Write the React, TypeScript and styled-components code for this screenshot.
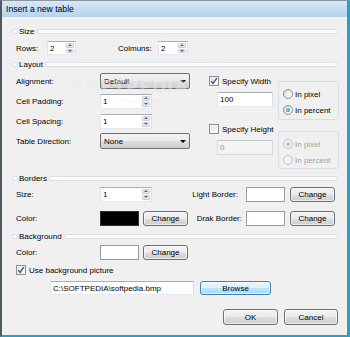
import styled, { createGlobalStyle } from 'styled-components';

const GlobalStyle = createGlobalStyle`
  html, body {
    margin: 0;
    padding: 0;
    background: #f0f0f0;
  }
  body {
    font-family: "Liberation Sans", Arial, sans-serif;
    font-size: 8px;
    color: #000;
  }
  * {
    box-sizing: border-box;
  }
`;

const Window = styled.div`
  width: 350px;
  height: 337px;
  position: relative;
  display: flex;
  flex-direction: column;
  background: #f0f0f0;
  border-top: 1px solid #8a96a2;
  border-left: 2px solid #4e5862;
  border-right: 3px solid #2e9dc4;
  border-bottom: 2px solid #2e9dc4;
  overflow: hidden;
`;

const TitleBar = styled.div`
  height: 16px;
  flex: none;
  padding-left: 4px;
  line-height: 16px;
  font-size: 8.6px;
  background: linear-gradient(#d9e8f6, #c2daf0 60%, #b8d3ec);
`;

const Content = styled.div`
  flex: 1;
  display: flex;
  flex-direction: column;
  padding: 0 9px 0 10px;
`;

const GroupHeader = styled.div<{ $top: number }>`
  height: 12px;
  margin-top: ${({ $top }) => $top}px;
  display: flex;
  align-items: center;
  &::before,
  &::after {
    content: '';
    height: 3px;
    border: 1px solid #d8dfe6;
    border-radius: 2px;
    background: #fbfcfd;
  }
  &::before {
    width: 4px;
  }
  &::after {
    flex: 1;
  }
  span {
    padding: 0 2px 0 1px;
  }
`;

const Row = styled.div<{ $top: number; $h?: number; $pl?: number }>`
  display: flex;
  align-items: center;
  height: ${({ $h }) => $h ?? 16}px;
  margin-top: ${({ $top }) => $top}px;
  padding-left: ${({ $pl }) => $pl ?? 4}px;
`;

const Label = styled.span<{ $w: number; $ml?: number; $right?: number }>`
  width: ${({ $w }) => $w}px;
  flex: none;
  margin-left: ${({ $ml }) => $ml ?? 0}px;
  text-align: ${({ $right }) => ($right !== undefined ? 'right' : 'left')};
  padding-right: ${({ $right }) => $right ?? 0}px;
  white-space: nowrap;
`;

const FieldBox = styled.div<{ $w: number; $h?: number; $ml?: number; $mt?: number; $disabled?: boolean }>`
  width: ${({ $w }) => $w}px;
  height: ${({ $h }) => $h ?? 15}px;
  margin-left: ${({ $ml }) => $ml ?? 0}px;
  margin-top: ${({ $mt }) => $mt ?? 0}px;
  flex: none;
  display: flex;
  align-items: center;
  background: ${({ $disabled }) => ($disabled ? '#f4f4f4' : '#fff')};
  color: ${({ $disabled }) => ($disabled ? '#8d8d8d' : '#000')};
  border: 1px solid;
  border-color: ${({ $disabled }) =>
    $disabled ? '#c9c9c9 #dadada #dadada #dadada' : '#abadb3 #dbdfe6 #e3e9ef #e2e3ea'};
  padding-left: 2px;
  white-space: nowrap;
  overflow: hidden;
`;

const SpinWrap = styled(FieldBox)`
  padding: 0 0 0 2px;
`;

const SpinValue = styled.span`
  flex: 1;
`;

const SpinButtons = styled.div`
  width: 9px;
  height: 100%;
  display: flex;
  flex-direction: column;
  gap: 1px;
  padding: 1px 1px 1px 0;
`;

const SpinBtn = styled.div<{ $down?: boolean }>`
  flex: 1;
  display: flex;
  align-items: center;
  justify-content: center;
  background: linear-gradient(#f6f6f6, #dfe3e8);
  border: 1px solid #c9ced6;
  border-radius: 1px;
  &::after {
    content: '';
    border-left: 2px solid transparent;
    border-right: 2px solid transparent;
    ${({ $down }) => ($down ? 'border-top' : 'border-bottom')}: 2px solid #4c607f;
  }
`;

const Combo = styled.div<{ $w: number }>`
  width: ${({ $w }) => $w}px;
  height: 16px;
  flex: none;
  display: flex;
  align-items: center;
  justify-content: space-between;
  padding: 0 3px 0 3px;
  border: 1px solid #707070;
  border-radius: 2px;
  background: linear-gradient(#f2f2f2 0%, #ebebeb 50%, #dddddd 51%, #cfcfcf 100%);
  &::after {
    content: '';
    border-left: 3px solid transparent;
    border-right: 3px solid transparent;
    border-top: 3px solid #000;
  }
`;

const Button = styled.div<{ $w: number; $h?: number; $ml?: number; $hover?: boolean }>`
  width: ${({ $w }) => $w}px;
  height: ${({ $h }) => $h ?? 15}px;
  margin-left: ${({ $ml }) => $ml ?? 0}px;
  flex: none;
  display: flex;
  align-items: center;
  justify-content: center;
  border: 1px solid ${({ $hover }) => ($hover ? '#3c7fb1' : '#707070')};
  border-radius: 3px;
  box-shadow: inset 0 0 0 1px ${({ $hover }) => ($hover ? 'rgba(255,255,255,0.7)' : 'rgba(255,255,255,0.6)')};
  background: ${({ $hover }) =>
    $hover
      ? 'linear-gradient(#eaf6fd 0%, #d9f0fc 50%, #bee6fd 51%, #a7d9f5 100%)'
      : 'linear-gradient(#f2f2f2 0%, #ebebeb 50%, #dddddd 51%, #cfcfcf 100%)'};
`;

const Swatch = styled.div<{ $color: string; $ml?: number }>`
  width: 39px;
  height: 15px;
  flex: none;
  margin-left: ${({ $ml }) => $ml ?? 0}px;
  background: ${({ $color }) => $color};
  border: 1px solid ${({ $color }) => ($color === '#000' ? '#303030' : '#9a9a9a')};
`;

const CheckBox = styled.div`
  width: 10px;
  height: 10px;
  flex: none;
  display: flex;
  align-items: center;
  justify-content: center;
  border: 1px solid #8e8f8f;
  background: linear-gradient(135deg, #dcdcdc, #f6f6f6 70%);
  box-shadow: inset 0 0 0 1px #f4f4f4;
  svg {
    display: block;
  }
`;

const CheckText = styled.span<{ $disabled?: boolean }>`
  margin-left: 3px;
  white-space: nowrap;
  color: ${({ $disabled }) => ($disabled ? '#a3a3a3' : '#000')};
`;

const LayoutBody = styled.div`
  display: flex;
  margin-top: 3px;
  padding-left: 4px;
`;

const LeftCol = styled.div`
  width: 193px;
  flex: none;
  display: flex;
  flex-direction: column;
  gap: 4px;
`;

const LeftRow = styled.div`
  display: flex;
  align-items: center;
  height: 16px;
`;

const RightCol = styled.div`
  display: flex;
  flex-direction: column;
  gap: 1px;
`;

const SpecBlock = styled.div`
  display: flex;
  align-items: flex-start;
`;

const SpecStack = styled.div`
  width: 64px;
  display: flex;
  flex-direction: column;
`;

const CheckRow = styled.div`
  height: 16px;
  display: flex;
  align-items: center;
`;

const RadioBox = styled.div<{ $top: number; $h: number }>`
  width: 61px;
  height: ${({ $h }) => $h}px;
  margin: ${({ $top }) => $top}px 0 0 5px;
  padding: 4px 0 0 4px;
  border: 1px solid #d5dfe5;
  border-radius: 3px;
`;

const RadioRow = styled.div`
  height: 16px;
  display: flex;
  align-items: center;
`;

const Radio = styled.div<{ $checked?: boolean; $disabled?: boolean }>`
  width: 10px;
  height: 10px;
  flex: none;
  border-radius: 50%;
  display: flex;
  align-items: center;
  justify-content: center;
  border: 1px solid ${({ $disabled }) => ($disabled ? '#c4c4c4' : '#8e8f8f')};
  background: ${({ $disabled }) =>
    $disabled ? '#f2f2f2' : 'linear-gradient(135deg, #d6d6d6, #f8f8f8 70%)'};
  &::after {
    content: '';
    display: ${({ $checked }) => ($checked ? 'block' : 'none')};
    width: 4px;
    height: 4px;
    border-radius: 50%;
    background: ${({ $disabled }) =>
      $disabled
        ? 'radial-gradient(circle at 40% 35%, #d8d8d8, #a6a6a6)'
        : 'radial-gradient(circle at 40% 35%, #8fd2ff, #1b6fb8)'};
  }
`;

const RadioText = styled.span<{ $disabled?: boolean }>`
  margin-left: 2px;
  white-space: nowrap;
  color: ${({ $disabled }) => ($disabled ? '#a3a3a3' : '#000')};
`;

const ActionRow = styled.div`
  display: flex;
  justify-content: flex-end;
  gap: 6px;
  height: 16px;
  margin-top: 14px;
`;

// faint site watermark lying over the form
const Watermark = styled.div`
  position: absolute;
  left: 70px;
  top: 76px;
  pointer-events: none;
  text-align: center;
  color: rgba(255, 255, 255, 0.4);
  text-shadow: 0 0 1px rgba(140, 140, 140, 0.12);
  font-family: "DejaVu Sans", sans-serif;
  font-weight: bold;
  font-size: 17px;
  letter-spacing: 1px;
  line-height: 20px;
  small {
    display: block;
    font-size: 6px;
    line-height: 8px;
    letter-spacing: 0;
    font-weight: normal;
    color: rgba(160, 160, 160, 0.15);
    text-shadow: none;
  }
`;

function Check() {
  return (
    <svg width="8" height="8" viewBox="0 0 8 8">
      <path d="M1.2 4.2 L3.1 6.4 L6.8 1.2" fill="none" stroke="#3a5586" strokeWidth="1.4" />
    </svg>
  );
}

function Spin({ w, value, h }: { w: number; value: string; h?: number }) {
  return (
    <SpinWrap $w={w} $h={h}>
      <SpinValue>{value}</SpinValue>
      <SpinButtons>
        <SpinBtn />
        <SpinBtn $down />
      </SpinButtons>
    </SpinWrap>
  );
}

function SpecifyBlock({
  title,
  checked,
  value,
  top,
  height,
}: {
  title: string;
  checked: boolean;
  value: string;
  top: number;
  height: number;
}) {
  const off = !checked;
  return (
    <SpecBlock>
      <SpecStack>
        <CheckRow>
          <CheckBox>{checked && <Check />}</CheckBox>
          <CheckText>{title}</CheckText>
        </CheckRow>
        <FieldBox $w={56} $ml={8} $mt={3} $disabled={off}>
          {value}
        </FieldBox>
      </SpecStack>
      <RadioBox $top={top} $h={height}>
        <RadioRow>
          <Radio $checked={off} $disabled={off} />
          <RadioText $disabled={off}>In pixel</RadioText>
        </RadioRow>
        <RadioRow>
          <Radio $checked={!off} $disabled={off} />
          <RadioText $disabled={off}>In percent</RadioText>
        </RadioRow>
      </RadioBox>
    </SpecBlock>
  );
}

export default function App() {
  return (
    <>
      <GlobalStyle />
      <Window>
        <TitleBar>Insert a new table</TitleBar>
        <Content>
          <GroupHeader $top={8}>
            <span>Size</span>
          </GroupHeader>
          <Row $top={4} $h={14}>
            <Label $w={31}>Rows:</Label>
            <Spin w={29} h={14} value="2" />
            <Label $w={40} $ml={42}>
              Colmuns:
            </Label>
            <Spin w={30} h={14} value="2" />
          </Row>

          <GroupHeader $top={3}>
            <span>Layout</span>
          </GroupHeader>
          <LayoutBody>
            <LeftCol>
              <LeftRow>
                <Label $w={84}>Alignment:</Label>
                <Combo $w={90}>Default</Combo>
              </LeftRow>
              <LeftRow>
                <Label $w={84}>Cell Padding:</Label>
                <Spin w={52} value="1" />
              </LeftRow>
              <LeftRow>
                <Label $w={84}>Cell Spacing:</Label>
                <Spin w={52} value="1" />
              </LeftRow>
              <LeftRow>
                <Label $w={84}>Table Direction:</Label>
                <Combo $w={90}>None</Combo>
              </LeftRow>
            </LeftCol>
            <RightCol>
              <SpecifyBlock title="Specify Width" checked value="100" top={8} height={39} />
              <SpecifyBlock title="Specify Height" checked={false} value="0" top={10} height={38} />
            </RightCol>
          </LayoutBody>

          <GroupHeader $top={3}>
            <span>Borders</span>
          </GroupHeader>
          <Row $top={2}>
            <Label $w={84}>Size:</Label>
            <Spin w={52} value="1" />
            <Label $w={94} $right={8}>
              Light Border:
            </Label>
            <Swatch $color="#fff" />
            <Button $w={45} $ml={5}>
              Change
            </Button>
          </Row>
          <Row $top={8}>
            <Label $w={84}>Color:</Label>
            <Swatch $color="#000" />
            <Button $w={45} $ml={4}>
              Change
            </Button>
            <Label $w={58} $right={4}>
              Drak Border:
            </Label>
            <Swatch $color="#fff" />
            <Button $w={45} $ml={5}>
              Change
            </Button>
          </Row>

          <GroupHeader $top={4}>
            <span>Background</span>
          </GroupHeader>
          <Row $top={2}>
            <Label $w={84}>Color:</Label>
            <Swatch $color="#fff" />
            <Button $w={45} $ml={4}>
              Change
            </Button>
          </Row>
          <Row $top={2}>
            <CheckBox>
              <Check />
            </CheckBox>
            <CheckText>Use background picture</CheckText>
          </Row>
          <Row $top={3} $h={14} $pl={38}>
            <FieldBox $w={144} $h={14}>
              C:\SOFTPEDIA\softpedia.bmp
            </FieldBox>
            <Button $w={71} $h={14} $ml={6} $hover>
              Browse
            </Button>
          </Row>

          <ActionRow>
            <Button $w={55} $h={16}>
              OK
            </Button>
            <Button $w={54} $h={16}>
              Cancel
            </Button>
          </ActionRow>
        </Content>
        <Watermark>
          SOFTPEDIA
          <small>www.softpedia.com</small>
        </Watermark>
      </Window>
    </>
  );
}
